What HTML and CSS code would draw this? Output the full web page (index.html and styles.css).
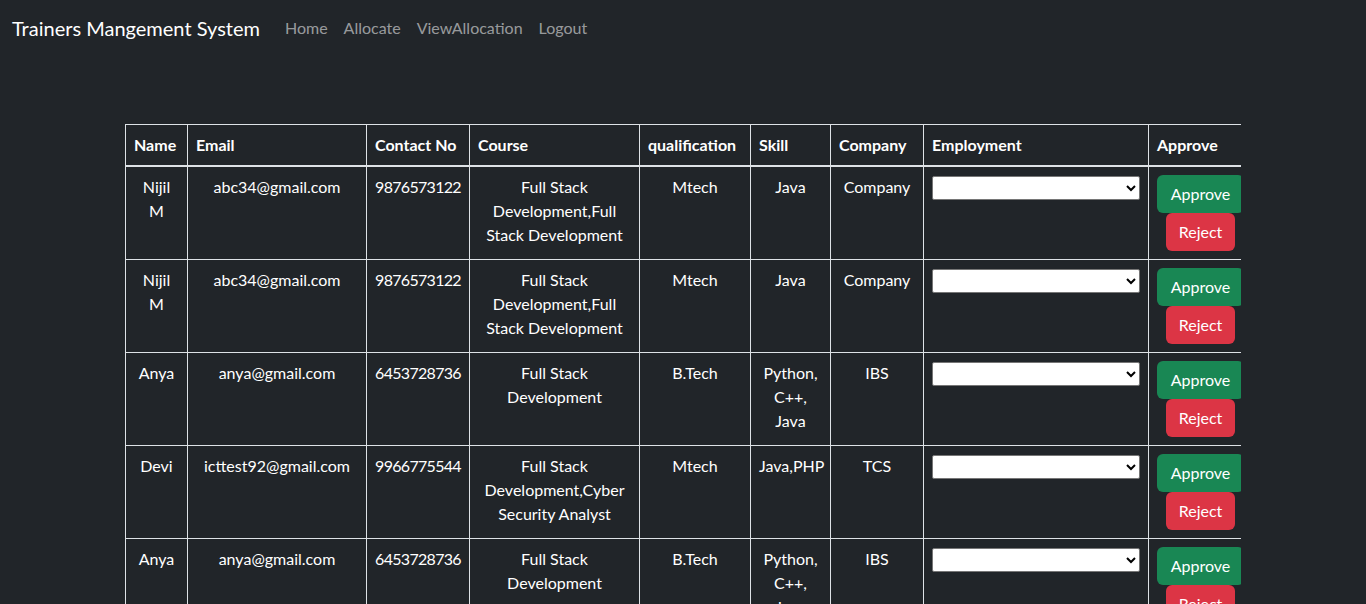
FILE: index.html
```html
<!DOCTYPE html>
<html lang="en">
<head>
<meta charset="utf-8">
<title>Trainers Mangement System</title>
<link rel="stylesheet" href="styles.css">
</head>
<body>
<nav class="navbar">
  <a class="brand" href="#">Trainers Mangement System</a>
  <ul class="nav">
    <li><a href="#">Home</a></li>
    <li><a href="#">Allocate</a></li>
    <li><a href="#">ViewAllocation</a></li>
    <li><a href="#">Logout</a></li>
  </ul>
</nav>
<main class="wrap">
  <table class="grid">
    <colgroup>
      <col class="c-name"><col class="c-email"><col class="c-contact"><col class="c-course"><col class="c-qual"><col class="c-skill"><col class="c-company"><col class="c-emp"><col class="c-approve">
    </colgroup>
    <thead>
      <tr><th>Name</th><th>Email</th><th>Contact No</th><th>Course</th><th>qualification</th><th>Skill</th><th>Company</th><th>Employment</th><th>Approve</th></tr>
    </thead>
    <tbody>
      <tr>
        <td>Nijil M</td><td>abc34@gmail.com</td><td class="num">9876573122</td><td>Full Stack Development,Full Stack Development</td><td>Mtech</td><td>Java</td><td>Company</td>
        <td><select class="sel"><option></option></select></td>
        <td><div class="actions"><button class="btn ok">Approve</button><button class="btn no">Reject</button></div></td>
      </tr>
      <tr>
        <td>Nijil M</td><td>abc34@gmail.com</td><td class="num">9876573122</td><td>Full Stack Development,Full Stack Development</td><td>Mtech</td><td>Java</td><td>Company</td>
        <td><select class="sel"><option></option></select></td>
        <td><div class="actions"><button class="btn ok">Approve</button><button class="btn no">Reject</button></div></td>
      </tr>
      <tr>
        <td>Anya</td><td>anya@gmail.com</td><td class="num">6453728736</td><td>Full Stack Development</td><td>B.Tech</td><td>Python, C++, Java</td><td>IBS</td>
        <td><select class="sel"><option></option></select></td>
        <td><div class="actions"><button class="btn ok">Approve</button><button class="btn no">Reject</button></div></td>
      </tr>
      <tr>
        <td>Devi</td><td>icttest92@gmail.com</td><td class="num">9966775544</td><td>Full Stack Development,Cyber Security Analyst</td><td>Mtech</td><td>Java,PHP</td><td>TCS</td>
        <td><select class="sel"><option></option></select></td>
        <td><div class="actions"><button class="btn ok">Approve</button><button class="btn no">Reject</button></div></td>
      </tr>
      <tr>
        <td>Anya</td><td>anya@gmail.com</td><td class="num">6453728736</td><td>Full Stack Development</td><td>B.Tech</td><td>Python, C++, Java</td><td>IBS</td>
        <td><select class="sel"><option></option></select></td>
        <td><div class="actions"><button class="btn ok">Approve</button><button class="btn no">Reject</button></div></td>
      </tr>
    </tbody>
  </table>
</main>
</body>
</html>
```
FILE: styles.css
```css
* { box-sizing: border-box; }
html, body { margin: 0; }
body {
  background: #212529;
  color: #fff;
  font-family: Lato, "Liberation Sans", sans-serif;
  font-size: 16px;
  line-height: 24px;
}
.navbar {
  display: flex;
  align-items: center;
  padding: 8px 12px;
  height: 56px;
}
.brand {
  color: #fff;
  text-decoration: none;
  font-size: 20px;
  line-height: 30px;
  padding: 5px 0;
  margin-right: 17px;
}
.nav {
  display: flex;
  list-style: none;
  margin: 0;
  padding: 0;
}
.nav a {
  display: block;
  padding: 8px;
  color: rgba(255,255,255,.55);
  text-decoration: none;
}
.wrap {
  width: 1116px;
  margin: 68px auto 0;
  overflow: hidden;
}
.grid {
  width: 1127px;
  table-layout: fixed;
  border-collapse: collapse;
  border-top: 1px solid #dee2e6;
}
.c-name { width: 62px; }
.c-email { width: 179px; }
.c-contact { width: 103px; }
.c-course { width: 170px; }
.c-qual { width: 111px; }
.c-skill { width: 80px; }
.c-company { width: 93px; }
.c-emp { width: 225px; }
.c-approve { width: 104px; }
.grid th, .grid td {
  border: 1px solid #dee2e6;
  padding: 8px;
  vertical-align: top;
}
.grid th {
  text-align: left;
  font-weight: 700;
  border-bottom: 2px solid #dee2e6;
  white-space: nowrap;
}
.grid td { text-align: center; }
.grid td.num { letter-spacing: -0.7px; }
.sel {
  display: block;
  width: 100%;
  height: 24px;
  background: #fff;
  border: 1px solid #767676;
  border-radius: 2px;
  margin-top: 1px;
}
.actions {
  display: flex;
  flex-direction: column;
  align-items: center;
}
.btn {
  border: 0;
  border-radius: 6px;
  color: #fff;
  font: inherit;
  line-height: 24px;
  padding: 7px 12px;
}
.ok { background: #198754; align-self: stretch; }
.no { background: #dc3545; padding: 7px 13px; }
```
